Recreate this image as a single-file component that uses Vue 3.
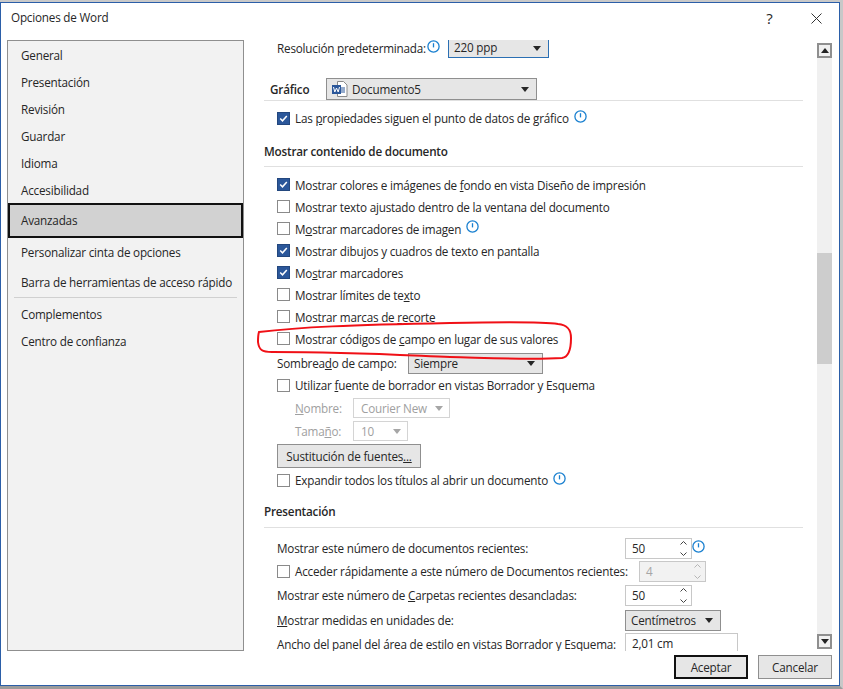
<script setup>
const nav1 = ['General', 'Presentación', 'Revisión', 'Guardar', 'Idioma', 'Accesibilidad']
const display = [
  { c: true, a: 'Mostrar colores e imágenes de ', u: 'f', b: 'ondo en vista Diseño de impresión' },
  { c: false, a: 'Mostrar texto ajustado dentro de la ventana del documento', u: '', b: '' },
  { c: false, a: 'M', u: 'o', b: 'strar marcadores de imagen', info: true },
  { c: true, a: 'Mostrar dibujos y cuadros de texto en pantalla', u: '', b: '' },
  { c: true, a: 'Mo', u: 's', b: 'trar marcadores' },
  { c: false, a: 'Mostrar límites de te', u: 'x', b: 'to' },
  { c: false, a: 'Mostrar marcas de ', u: 'r', b: 'ecorte' },
  { c: false, a: 'Mostrar códigos de ', u: 'c', b: 'ampo en lugar de sus valores' }
]
</script>

<template>
  <div class="window">
    <header class="titlebar">
      <span class="title">Opciones de Word</span>
      <div class="controls">
        <span class="help">?</span>
        <svg width="11" height="11" viewBox="0 0 11 11"><path d="M.5.5l10 10M10.500 .5l-10 10" stroke="#333" fill="none"/></svg>
      </div>
    </header>
    <div class="body">
      <nav class="sidebar">
        <div class="nav-group">
          <div v-for="n in nav1" :key="n" class="nav-item">{{ n }}</div>
        </div>
        <div class="nav-active">Avanzadas</div>
        <div class="nav-wide">Personalizar cinta de opciones</div>
        <div class="nav-wide">Barra de herramientas de acceso rápido</div>
        <div class="nav-sep"></div>
        <div class="nav-item">Complementos</div>
        <div class="nav-item">Centro de confianza</div>
      </nav>
      <main class="panel">
        <div class="scroll">
          <div class="row res">
            <span class="res-l">Resolución <u>p</u>redeterminada:</span>
            <svg class="info sup" viewBox="0 0 13 13"><circle cx="6.500" cy="6.500" r="5.600"/><path d="M6.500 3.200v4.200"/></svg>
            <div class="drop res-drop"><span>220 ppp</span><i class="arrow"></i></div>
          </div>
          <div class="graf">
            <b class="h-graf">Gráfico</b>
            <div class="drop doc-drop">
              <svg class="word" width="16" height="16" viewBox="0 0 16 16">
                <path d="M5.500 .5h6l3.500 3.500v11.500h-9.500z" fill="#fff" stroke="#8a8a8a"/>
                <path d="M9 7h4M9 9h4M9 11h4" stroke="#2b579a"/>
                <rect x="0" y="4" width="9" height="9" fill="#2b579a"/>
                <path d="M1.500 6l1.300 5 1.700-4 1.700 4 1.300-5" stroke="#fff" fill="none"/>
              </svg>
              <span>Documento5</span><i class="arrow"></i>
            </div>
          </div>
          <div class="rule"></div>
          <div class="row chk prop">
            <span class="box on"><svg viewBox="0 0 11 11"><path d="M2.200 5.500l2.300 2.300 4.300-4.800" /></svg></span>
            <span>Las <u>p</u>ropiedades siguen el punto de datos de gráfico</span>
            <svg class="info" viewBox="0 0 13 13"><circle cx="6.500" cy="6.500" r="5.600"/><path d="M6.500 3.200v4.200"/></svg>
          </div>
          <div class="section s1">Mostrar contenido de documento</div>
          <div class="rule"></div>
          <div class="list">
            <div v-for="d in display" :key="d.a + d.b" class="row chk">
              <span class="box" :class="{ on: d.c }"><svg v-if="d.c" viewBox="0 0 11 11"><path d="M2.200 5.500l2.300 2.300 4.300-4.800" /></svg></span>
              <span class="lbl">{{ d.a }}<u>{{ d.u }}</u>{{ d.b }}</span>
              <svg v-if="d.info" class="info" viewBox="0 0 13 13"><circle cx="6.500" cy="6.500" r="5.600"/><path d="M6.500 3.200v4.200"/></svg>
            </div>
          </div>
          <div class="row shade">
            <span class="shade-l">Sombrea<u>d</u>o de campo:</span>
            <div class="drop shade-drop"><span>Siempre</span><i class="arrow"></i></div>
          </div>
          <div class="row chk draft">
            <span class="box"></span>
            <span>Utilizar <u>f</u>uente de borrador en vistas Borrador y Esquema</span>
          </div>
          <div class="row sub name">
            <span class="sub-l"><u>N</u>ombre:</span>
            <div class="dis name-d"><span>Courier New</span><i class="arrow"></i></div>
          </div>
          <div class="row sub size">
            <span class="sub-l">Tama<u>ñ</u>o:</span>
            <div class="dis size-d"><span>10</span><i class="arrow"></i></div>
          </div>
          <button class="btn subst">Sustitución de fuentes<u>...</u></button>
          <div class="row chk expand">
            <span class="box"></span>
            <span>Expandir todos los títulos al abrir un documento</span>
            <svg class="info" viewBox="0 0 13 13"><circle cx="6.500" cy="6.500" r="5.600"/><path d="M6.500 3.200v4.200"/></svg>
          </div>
          <div class="section s2">Presentación</div>
          <div class="rule"></div>
          <div class="row form f1">
            <span class="form-l">Mostrar este número de documentos recientes:</span>
            <div class="spin"><span>50</span><svg width="9" height="15" viewBox="0 0 9 15"><path d="M1.500 3.500l3-3 3 3M1.500 11.500l3 3 3-3"/></svg></div>
            <svg class="info f-info" viewBox="0 0 13 13"><circle cx="6.500" cy="6.500" r="5.600"/><path d="M6.500 3.200v4.200"/></svg>
          </div>
          <div class="row form f2">
            <span class="box"></span>
            <span class="form-l2">Acceder rápidamente a este número de Documentos recientes:</span>
            <div class="spin off"><span>4</span><svg width="9" height="15" viewBox="0 0 9 15"><path d="M1.500 3.500l3-3 3 3M1.500 11.500l3 3 3-3"/></svg></div>
          </div>
          <div class="row form f3">
            <span class="form-l">Mostrar este número de <u>C</u>arpetas recientes desancladas:</span>
            <div class="spin"><span>50</span><svg width="9" height="15" viewBox="0 0 9 15"><path d="M1.500 3.500l3-3 3 3M1.500 11.500l3 3 3-3"/></svg></div>
          </div>
          <div class="row form f4">
            <span class="form-l"><u>M</u>ostrar medidas en unidades de:</span>
            <div class="drop unit"><span>Centímetros</span><i class="arrow"></i></div>
          </div>
          <div class="row form f5">
            <span class="form-l">Ancho del panel del área de estilo en vistas Borrador y Esquema:</span>
            <div class="field">2,01 cm</div>
          </div>
        </div>
        <div class="scrollbar">
          <div class="sb-btn"><i class="tri up"></i></div>
          <div class="track"><div class="thumb"></div></div>
          <div class="sb-btn dn"><i class="tri"></i></div>
        </div>
      </main>
    </div>
    <footer class="footer">
      <button class="btn ok">Aceptar</button>
      <button class="btn cancel">Cancelar</button>
    </footer>
    <svg class="mark" width="843" height="689" viewBox="0 0 843 689">
      <path d="M259 332C300 327 350 325 450 323C500 322 545 322 558 324C568 325 571 330 571 338C571 348 569 357 562 358C530 360 490 358 450 357C400 355 350 352 272 352C262 352 259 350 258 342C258 338 258 335 259 332Z" />
    </svg>
  </div>
</template>

<style>
html, body { margin: 0; background: #fff; }
</style>

<style scoped>
.window {
  position: relative;
  width: 843px;
  height: 689px;
  box-sizing: border-box;
  overflow: hidden;
  background: #fff;
  color: #262626;
  font: 11.7px/16px "Open Sans", sans-serif;
  letter-spacing: -0.2px;
  border-top: 2px solid #c9c9c9;
  border-bottom: 3px solid #9b9b9b;
  border-right: 3px solid #c8c8c8;
  display: flex;
  flex-direction: column;
}
.window::before {
  content: "";
  position: absolute;
  inset: 0;
  border: 1px solid #2b5ea8;
  pointer-events: none;
}
.titlebar { height: 38px; flex: none; display: flex; justify-content: space-between; align-items: center; padding: 0 18px 0 11px; box-sizing: border-box; }
.title { margin-top: -9px; }
.controls { display: flex; align-items: center; gap: 37px; margin-top: -6px; }
.help { font-size: 15px; width: 9px; text-align: center; }
.controls svg { display: block; }
.body { display: flex; height: 611px; flex: none; }
.sidebar { width: 237px; margin-left: 7px; box-sizing: border-box; border: 1px solid #8f8f8f; background: #f2f2f2; flex: none; padding-top: 1px; }
.nav-group { margin-bottom: -1px; }
.nav-item { height: 27px; line-height: 27px; padding-left: 13px; }
.nav-active { height: 35px; line-height: 31px; box-sizing: border-box; border: 2px solid #111; background: #d2d2d2; padding-left: 11px; margin-bottom: -1px; }
.nav-wide { height: 30px; line-height: 30px; padding-left: 13px; }
.nav-sep { height: 1px; margin: 0 6px 3px 6px; background: #d0d0d0; }
.panel { flex: 1; display: flex; min-width: 0; padding-right: 8px; }
.scroll { flex: 1; min-width: 0; overflow: hidden; height: 611px; padding: 0 14px 0 20px; }
.row { display: flex; align-items: center; white-space: nowrap; }
.res { height: 18px; padding-left: 13px; align-items: flex-start; }
.drop { display: flex; align-items: center; box-sizing: border-box; border: 1px solid #8f8f8f; background: #e6e6e6; position: relative; }
.arrow { width: 0; height: 0; border: 4px solid transparent; border-top: 5px solid #262626; border-bottom: 0; position: absolute; right: 7px; top: 50%; margin-top: -2px; }
.res-drop { width: 101px; height: 18px; margin-left: 8px; padding-left: 5px; padding-bottom: 3px; border-color: #2b6fb3; border-top: 0; }
.res-drop .arrow { top: 6px; margin: 0; }
.info { width: 13px; height: 13px; margin: -3px 0 0 0; flex: none; fill: none; stroke: #1a80d0; stroke-width: 1.300; }
.sup { margin: 0 0 0 1px; }
.f-info { margin-top: -3px; }
.graf { display: flex; align-items: center; height: 22px; margin-top: 20px; padding-left: 6px; }
.h-graf { width: 56px; font-weight: 600; }
.doc-drop { width: 211px; height: 22px; padding-left: 5px; gap: 4px; }
.word { flex: none; }
.rule { height: 1px; background: #e0e0e0; }
.chk { height: 22px; gap: 5px; padding-left: 13px; }
.lbl { padding-top: 2px; }
.prop { margin-top: 6px; }
.box { width: 13px; height: 13px; box-sizing: border-box; border: 1px solid #8a8a8a; background: #fff; flex: none; display: block; }
.box.on { background: #2b579a; border-color: #23477e; }
.box svg { display: block; width: 100%; height: 100%; fill: none; stroke: #fff; stroke-width: 1.500; }
.section { font-weight: 600; height: 18px; line-height: 18px; }
.s1 { margin-top: 13px; margin-bottom: 6px; }
.s2 { margin-top: 11px; margin-bottom: 7px; }
.list { margin-top: 6px; }
.shade { height: 22px; margin-top: 3px; padding-left: 13px; }
.shade-l { width: 131px; }
.shade-drop { width: 135px; height: 21px; padding-left: 5px; }
.sub { padding-left: 31px; color: #a0a0a0; height: 22px; margin-top: 1px; }
.sub-l { width: 58px; }
.dis { height: 20px; box-sizing: border-box; border: 1px solid #d4d4d4; display: flex; align-items: center; padding-left: 7px; position: relative; }
.dis .arrow { border-top-color: #a6a6a6; right: 6px; }
.name-d { width: 97px; }
.size-d { width: 55px; }
.btn { font: inherit; letter-spacing: inherit; color: inherit; background: #e6e6e6; border: 1px solid #8f8f8f; padding: 0; box-sizing: border-box; }
.subst { display: block; width: 144px; height: 24px; margin: 2px 0 0 13px; }
.expand { margin-top: 1px; }
.form { padding-left: 13px; height: 24px; }
.f1 { margin-top: 8px; }
.f2 { margin-top: -1px; }
.f4 { margin-top: 1px; }
.form-l { width: 348px; }
.form-l2 { width: 344px; margin-left: 5px; }
.spin { width: 67px; height: 21px; flex: none; box-sizing: border-box; border: 1px solid #c8c8c8; padding: 0 3px 0 6px; display: flex; align-items: center; justify-content: space-between; }
.spin svg { fill: none; stroke: #444; stroke-width: 1; display: block; }
.off { background: #f2f2f2; color: #a6a6a6; }
.off svg { stroke: #b5b5b5; }
.unit { width: 96px; height: 21px; padding-left: 5px; flex: none; }
.field { width: 113px; height: 24px; flex: none; align-self: flex-start; box-sizing: border-box; border: 1px solid #c8c8c8; border-bottom: 0; padding: 1px 6px; margin-top: 1px; }
.scrollbar { width: 15px; flex: none; margin-top: 3px; display: flex; flex-direction: column; height: 608px; }
.sb-btn { height: 15px; box-sizing: border-box; border: 2px solid #8f8f8f; background: #f0f0f0; display: flex; align-items: center; justify-content: center; flex: none; }
.sb-btn.dn { margin-bottom: 2px; }
.tri { width: 0; height: 0; border: 4px solid transparent; border-top: 5px solid #222; border-bottom: 0; }
.tri.up { border-top: 0; border-bottom: 5px solid #222; }
.track { flex: 1; background: #f0f0f0; padding-top: 195px; }
.thumb { height: 111px; background: #cdcdcd; }
.footer { display: flex; justify-content: flex-end; gap: 10px; padding: 4px 8px 0 0; }
.footer .btn { width: 74px; height: 24px; }
.ok.ok { border: 2px solid #111; }
.mark { position: absolute; left: 0; top: -2px; pointer-events: none; }
.mark path { fill: none; stroke: #f01016; stroke-width: 2; }
</style>
